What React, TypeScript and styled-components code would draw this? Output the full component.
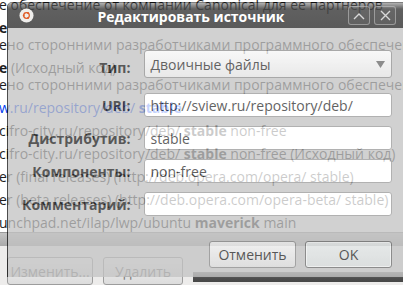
import React from 'react';
import styled, { createGlobalStyle } from 'styled-components';

const GlobalStyle = createGlobalStyle`
  html, body {
    margin: 0;
    padding: 0;
    width: 403px;
    height: 285px;
    overflow: hidden;
  }
  body {
    font-family: "Open Sans", "Noto Sans", sans-serif;
  }
`;

const Screen = styled.div`
  position: relative;
  width: 403px;
  height: 285px;
  overflow: hidden;
  background: #edeceb;
`;

/* ---------- background window (Software Sources) ---------- */

const SourcesWindow = styled.div`
  display: flex;
  flex-direction: column;
  height: 100%;
`;

const ListViewport = styled.div`
  height: 237px;
  overflow: hidden;
  background: #ffffff;
`;

const SourceList = styled.div`
  margin-top: -24px;
`;

const Entry = styled.div`
  padding: 3px 0;
`;

const Line = styled.div<{ $blue?: boolean }>`
  font-size: 14px;
  line-height: 17px;
  white-space: nowrap;
  color: ${({ $blue }) => ($blue ? '#0040f0' : '#1e1e1e')};
  margin-left: -1px;

  b {
    font-weight: 700;
  }
`;

const ScrollBand = styled.div`
  height: 13px;
  background: linear-gradient(#c4c4c4, #a9a9a9);
  border-top: 1px solid #9a9a9a;
`;

const ActionRow = styled.div`
  display: flex;
  gap: 10px;
  padding: 11px 0 0 7px;
`;

const ActionButton = styled.div<{ $w: number }>`
  width: ${({ $w }) => $w}px;
  height: 28px;
  box-sizing: border-box;
  border: 1px solid #9c9c9c;
  border-radius: 3px;
  background: linear-gradient(#f4f4f4, #dcdcdc);
  color: #7a7a7a;
  font-size: 14px;
  display: flex;
  align-items: center;
  justify-content: center;
`;

const DarkFiller = styled.div`
  flex: 1;
  margin: 15px 0 0 0;
  height: 10px;
  background: linear-gradient(#8a8a8a, #4e4e4e 60%, #474747);
`;

/* ---------- dialog ---------- */

const Dialog = styled.div`
  position: absolute;
  left: 7px;
  top: 2px;
  width: 400px;
  height: 275px;
  display: flex;
  flex-direction: column;
  border-left: 1px solid rgba(0, 0, 0, 0.7);
  border-top: 1px solid rgba(0, 0, 0, 0.5);
  border-radius: 5px 5px 0 0;
  overflow: hidden;
  box-sizing: border-box;
`;

const TitleBar = styled.div`
  height: 25px;
  flex: none;
  display: flex;
  align-items: center;
  padding: 0 5px 0 5px;
  background: linear-gradient(
    rgba(100, 100, 100, 0.5) 0px,
    rgba(70, 70, 70, 0.86) 6px,
    rgba(72, 72, 72, 0.9) 100%
  );
`;

const TitleIcon = styled.svg`
  width: 15px;
  height: 15px;
  flex: none;
  margin-left: 6px;
`;

const TitleText = styled.div`
  flex: 1;
  text-align: center;
  color: #ffffff;
  font-weight: 700;
  font-size: 14px;
  padding-top: 1px;
`;

const TitleButtons = styled.div`
  display: flex;
  gap: 4px;
  align-items: center;
  padding-right: 6px;
`;

const TitleButton = styled.div`
  width: 22px;
  height: 19px;
  box-sizing: border-box;
  border: 1px solid rgba(200, 200, 200, 0.55);
  border-radius: 3px;
  display: flex;
  align-items: center;
  justify-content: center;
  background: rgba(255, 255, 255, 0.04);
`;

const Body = styled.div`
  flex: 1;
  display: flex;
  flex-direction: column;
  padding: 22px 15px 9px 14px;
  background: #c4c4c4;
  opacity: 0.77;
`;

const Form = styled.div`
  display: grid;
  grid-template-columns: auto 1fr;
  column-gap: 14px;
  row-gap: 9px;
  align-items: center;
`;

const Label = styled.div`
  text-align: right;
  font-weight: 700;
  font-size: 14px;
  color: #262626;
  white-space: nowrap;
`;

const Field = styled.div<{ $tall?: boolean }>`
  height: ${({ $tall }) => ($tall ? 28 : 24)}px;
  box-sizing: border-box;
  border: 1px solid ${({ $tall }) => ($tall ? '#8e8e8e' : '#9a9a9a')};
  border-radius: 3px;
  background: ${({ $tall }) =>
    $tall ? 'linear-gradient(#f6f6f6, #e2e2e2)' : '#ffffff'};
  display: flex;
  align-items: center;
  padding: 0 6px 0 5px;
  font-size: 14px;
  color: #333333;
  white-space: nowrap;
  overflow: hidden;
  margin-bottom: ${({ $tall }) => ($tall ? 6 : 0)}px;
`;

const FieldText = styled.span`
  flex: 1;
`;

const Arrow = styled.svg`
  width: 9px;
  height: 7px;
  flex: none;
`;

const Buttons = styled.div`
  display: flex;
  justify-content: flex-end;
  gap: 9px;
  margin-top: 25px;
`;

const DialogButton = styled.div<{ $default?: boolean }>`
  width: 87px;
  height: 27px;
  box-sizing: border-box;
  border: 1px solid ${({ $default }) => ($default ? '#6f6f6f' : '#8c8c8c')};
  border-radius: 3px;
  background: ${({ $default }) =>
    $default
      ? 'linear-gradient(#e4e8e8, #d6dada)'
      : 'linear-gradient(#f2f2f2, #dadada)'};
  box-shadow: ${({ $default }) =>
    $default ? 'inset 0 0 0 1px rgba(255,255,255,0.6)' : 'none'};
  display: flex;
  align-items: center;
  justify-content: center;
  font-size: 14px;
  color: #2a2a2a;
`;

const fields = [
  { label: 'URI:', value: 'http://sview.ru/repository/deb/' },
  { label: 'Дистрибутив:', value: 'stable' },
  { label: 'Компоненты:', value: 'non-free' },
  { label: 'Комментарий:', value: '' },
];

const App: React.FC = () => {
  return (
    <Screen>
      <GlobalStyle />
      <SourcesWindow>
        <ListViewport>
          <SourceList>
            <Entry>
              <Line>
                <b>ы Canonical</b>
              </Line>
              <Line>е обеспечение от компании Canonical для ее партнеров</Line>
            </Entry>
            <Entry>
              <Line>
                <b>е</b>
              </Line>
              <Line>ено сторонними разработчиками программного обеспечения</Line>
            </Entry>
            <Entry>
              <Line>
                <b>е</b> (Исходный код)
              </Line>
              <Line>ено сторонними разработчиками программного обеспечения</Line>
            </Entry>
            <Entry>
              <Line $blue>
                w.ru/repository/deb/ <b>stable</b>
              </Line>
            </Entry>
            <Entry>
              <Line>
                cifro-city.ru/repository/deb/ <b>stable</b> non-free
              </Line>
            </Entry>
            <Entry>
              <Line>
                cifro-city.ru/repository/deb/ <b>stable</b> non-free (Исходный код)
              </Line>
            </Entry>
            <Entry>
              <Line>
                er (final releases) (http://deb.opera.com/opera/ stable)
              </Line>
            </Entry>
            <Entry>
              <Line>
                er (beta releases) (http://deb.opera.com/opera-beta/ stable)
              </Line>
            </Entry>
            <Entry>
              <Line>
                unchpad.net/ilap/lwp/ubuntu <b>maverick</b> main
              </Line>
            </Entry>
          </SourceList>
        </ListViewport>
        <ScrollBand />
        <ActionRow>
          <ActionButton $w={86}>Изменить...</ActionButton>
          <ActionButton $w={80}>Удалить</ActionButton>
          <DarkFiller />
        </ActionRow>
      </SourcesWindow>

      <Dialog>
        <TitleBar>
          <TitleIcon viewBox="0 0 16 16">
            <circle cx="8" cy="8" r="7.5" fill="#efeeec" />
            <circle cx="8" cy="8" r="3" fill="none" stroke="#e05a24" strokeWidth="1.3" />
            <circle cx="5" cy="8" r="1" fill="#e05a24" />
            <circle cx="9.6" cy="5.3" r="1" fill="#e05a24" />
            <circle cx="9.6" cy="10.7" r="1" fill="#e05a24" />
          </TitleIcon>
          <TitleText>Редактировать источник</TitleText>
          <TitleButtons>
            <TitleButton>
              <svg width="12" height="8" viewBox="0 0 12 8">
                <path d="M1 7 L6 2 L11 7" fill="none" stroke="#d8d8d8" strokeWidth="1.4" />
              </svg>
            </TitleButton>
            <TitleButton>
              <svg width="11" height="11" viewBox="0 0 11 11">
                <path d="M1 1 L10 10 M10 1 L1 10" fill="none" stroke="#d8d8d8" strokeWidth="1.4" />
              </svg>
            </TitleButton>
          </TitleButtons>
        </TitleBar>
        <Body>
          <Form>
            <Label>Тип:</Label>
            <Field $tall>
              <FieldText>Двоичные файлы</FieldText>
              <Arrow viewBox="0 0 9 7">
                <path d="M0 0 H9 L4.5 7 Z" fill="#6a6a6a" />
              </Arrow>
            </Field>
            {fields.map((f) => (
              <React.Fragment key={f.label}>
                <Label>{f.label}</Label>
                <Field>
                  <FieldText>{f.value}</FieldText>
                </Field>
              </React.Fragment>
            ))}
          </Form>
          <Buttons>
            <DialogButton>Отменить</DialogButton>
            <DialogButton $default>OK</DialogButton>
          </Buttons>
        </Body>
      </Dialog>
    </Screen>
  );
};

export default App;
